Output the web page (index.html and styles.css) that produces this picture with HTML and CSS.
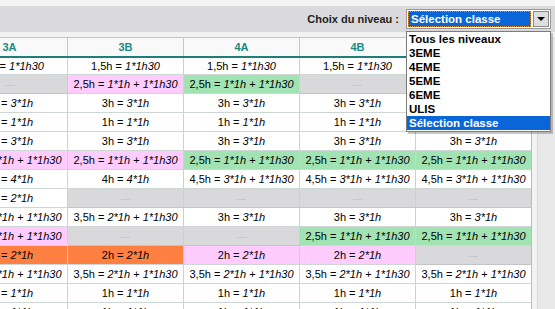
FILE: index.html
```html
<!DOCTYPE html>
<html lang="fr">
<head>
<meta charset="utf-8">
<title>Choix du niveau</title>
<link rel="stylesheet" href="styles.css">
</head>
<body>
<div class="top"></div>
<div class="toolbar">
  <span class="label">Choix du niveau :</span>
  <div class="select">
    <div class="value">Sélection classe</div>
    <div class="btn"><span class="tri"></span></div>
  </div>
</div>
<div class="gap"></div>
<div class="main">
  <div class="tablewrap">
    <table>
      <colgroup><col class="c"><col class="c"><col class="c"><col class="c"><col class="c"></colgroup>
      <thead>
        <tr><th>3A</th><th>3B</th><th>4A</th><th>4B</th><th>5A</th></tr>
      </thead>
      <tbody>
        <tr class="first">
          <td>1,5h = <i>1*1h30</i></td><td>1,5h = <i>1*1h30</i></td><td>1,5h = <i>1*1h30</i></td><td>1,5h = <i>1*1h30</i></td><td>1,5h = <i>1*1h30</i></td>
        </tr>
        <tr>
          <td class="g"><span class="dash">—</span></td><td class="p">2,5h = <i>1*1h</i> + <i>1*1h30</i></td><td class="gr">2,5h = <i>1*1h</i> + <i>1*1h30</i></td><td class="g"><span class="dash">—</span></td><td class="g"><span class="dash">—</span></td>
        </tr>
        <tr>
          <td>3h = <i>3*1h</i></td><td>3h = <i>3*1h</i></td><td>3h = <i>3*1h</i></td><td>3h = <i>3*1h</i></td><td>3h = <i>3*1h</i></td>
        </tr>
        <tr>
          <td>1h = <i>1*1h</i></td><td>1h = <i>1*1h</i></td><td>1h = <i>1*1h</i></td><td>1h = <i>1*1h</i></td><td>1h = <i>1*1h</i></td>
        </tr>
        <tr>
          <td>3h = <i>3*1h</i></td><td>3h = <i>3*1h</i></td><td>3h = <i>3*1h</i></td><td>3h = <i>3*1h</i></td><td>3h = <i>3*1h</i></td>
        </tr>
        <tr>
          <td class="p">2,5h = <i>1*1h</i> + <i>1*1h30</i></td><td class="p">2,5h = <i>1*1h</i> + <i>1*1h30</i></td><td class="gr">2,5h = <i>1*1h</i> + <i>1*1h30</i></td><td class="gr">2,5h = <i>1*1h</i> + <i>1*1h30</i></td><td class="gr">2,5h = <i>1*1h</i> + <i>1*1h30</i></td>
        </tr>
        <tr>
          <td>4h = <i>4*1h</i></td><td>4h = <i>4*1h</i></td><td>4,5h = <i>3*1h</i> + <i>1*1h30</i></td><td>4,5h = <i>3*1h</i> + <i>1*1h30</i></td><td>4,5h = <i>3*1h</i> + <i>1*1h30</i></td>
        </tr>
        <tr>
          <td>2h = <i>2*1h</i></td><td class="g"><span class="dash">—</span></td><td class="g"><span class="dash">—</span></td><td class="g"><span class="dash">—</span></td><td class="g"><span class="dash">—</span></td>
        </tr>
        <tr>
          <td>3,5h = <i>2*1h</i> + <i>1*1h30</i></td><td>3,5h = <i>2*1h</i> + <i>1*1h30</i></td><td>3h = <i>3*1h</i></td><td>3h = <i>3*1h</i></td><td>3h = <i>3*1h</i></td>
        </tr>
        <tr>
          <td class="p">2,5h = <i>1*1h</i> + <i>1*1h30</i></td><td class="g"><span class="dash">—</span></td><td class="g"><span class="dash">—</span></td><td class="gr">2,5h = <i>1*1h</i> + <i>1*1h30</i></td><td class="gr">2,5h = <i>1*1h</i> + <i>1*1h30</i></td>
        </tr>
        <tr>
          <td class="o">2h = <i>2*1h</i></td><td class="o">2h = <i>2*1h</i></td><td class="p">2h = <i>2*1h</i></td><td class="p">2h = <i>2*1h</i></td><td class="g"><span class="dash">—</span></td>
        </tr>
        <tr>
          <td>3,5h = <i>2*1h</i> + <i>1*1h30</i></td><td>3,5h = <i>2*1h</i> + <i>1*1h30</i></td><td>3,5h = <i>2*1h</i> + <i>1*1h30</i></td><td>3,5h = <i>2*1h</i> + <i>1*1h30</i></td><td>3,5h = <i>2*1h</i> + <i>1*1h30</i></td>
        </tr>
        <tr>
          <td>1h = <i>1*1h</i></td><td>1h = <i>1*1h</i></td><td>1h = <i>1*1h</i></td><td>1h = <i>1*1h</i></td><td>1h = <i>1*1h</i></td>
        </tr>
        <tr>
          <td>1h = <i>1*1h</i></td><td>1h = <i>1*1h</i></td><td>1h = <i>1*1h</i></td><td>1h = <i>1*1h</i></td><td>1h = <i>1*1h</i></td>
        </tr>
      </tbody>
    </table>
  </div>
  <div class="scroll"><div class="track"></div><div class="rest"></div></div>
</div>
<div class="dropdown">
  <div class="opt">Tous les niveaux</div>
  <div class="opt">3EME</div>
  <div class="opt">4EME</div>
  <div class="opt">5EME</div>
  <div class="opt">6EME</div>
  <div class="opt">ULIS</div>
  <div class="opt sel">Sélection classe</div>
</div>
</body>
</html>
```
FILE: styles.css
```css
html, body {
  margin: 0;
  padding: 0;
}
body {
  width: 555px;
  height: 309px;
  overflow: hidden;
  position: relative;
  background: #f2f2f2;
  font-family: "Liberation Sans", Arial, sans-serif;
  color: #000;
}
.top {
  height: 6px;
  background: #f4f4f4;
}
.toolbar {
  height: 26px;
  background: #dadadc;
  display: flex;
  align-items: center;
  justify-content: flex-end;
  gap: 7px;
  padding-right: 4px;
}
.label {
  font-size: 11px;
  font-weight: bold;
  color: #1e1e1e;
}
.select {
  box-sizing: border-box;
  width: 145px;
  height: 20px;
  border: 1px solid #9a9a9a;
  background: #fff;
  display: flex;
  align-items: center;
  padding: 1px;
  gap: 2px;
}
.value {
  flex: 1;
  box-sizing: border-box;
  height: 16px;
  line-height: 14px;
  background: #0a66d8;
  color: #fff;
  font-size: 11.5px;
  font-weight: bold;
  padding-left: 2px;
  border: 1px dotted #e88a2a;
}
.btn {
  box-sizing: border-box;
  width: 16px;
  height: 16px;
  background: #dedede;
  border: 1px solid #8a8a8a;
  display: flex;
  align-items: center;
  justify-content: center;
}
.tri {
  width: 0;
  height: 0;
  border-left: 4px solid transparent;
  border-right: 4px solid transparent;
  border-top: 4px solid #000;
}
.gap {
  height: 5px;
}
.main {
  display: flex;
  height: 272px;
}
.tablewrap {
  width: 531px;
  overflow: hidden;
  background: #fff;
}
table {
  border-collapse: collapse;
  table-layout: fixed;
  width: 580px;
  margin-left: -49px;
}
col.c {
  width: 116px;
}
th {
  height: 18px;
  padding: 0;
  border: 1px solid #c6c6c6;
  border-bottom: 2px solid #1e7f78;
  background: #f9f9f9;
  color: #1b8a82;
  font-size: 11px;
  font-weight: bold;
  text-align: center;
}
td {
  height: 18px;
  padding: 0;
  border-left: 1px solid #a6e2de;
  border-right: 1px solid #a6e2de;
  border-bottom: 1px solid #cfd6d6;
  font-size: 11px;
  text-align: center;
  white-space: nowrap;
  overflow: hidden;
  background: #fff;
}
tr.first td {
  height: 16px;
}
td i {
  font-style: italic;
}
td.p {
  background: #ffccff;
}
td.gr {
  background: #a2e3b3;
}
td.g {
  background: #d9d9db;
  border-bottom-color: #c4c4c4;
}
td.o {
  background: #ff8040;
}
.dash {
  color: #bdbdbd;
  font-size: 9px;
}
.scroll {
  flex: 1;
  display: flex;
  border-left: 1px solid #bcbcbc;
}
.track {
  width: 5px;
  background: #f3f3f3;
  border-right: 1px solid #dadada;
}
.rest {
  flex: 1;
  background: #e9e9e9;
}
.dropdown {
  position: absolute;
  left: 406px;
  top: 31px;
  width: 143px;
  border: 1px solid #7a7a7a;
  background: #fff;
  box-shadow: 2px 2px 0 rgba(0, 0, 0, 0.22);
  padding-bottom: 1px;
}
.opt {
  height: 14px;
  line-height: 14px;
  font-size: 11.5px;
  font-weight: bold;
  padding-left: 2px;
  color: #000;
}
.opt.sel {
  background: #0a66d8;
  color: #fff;
}
```
